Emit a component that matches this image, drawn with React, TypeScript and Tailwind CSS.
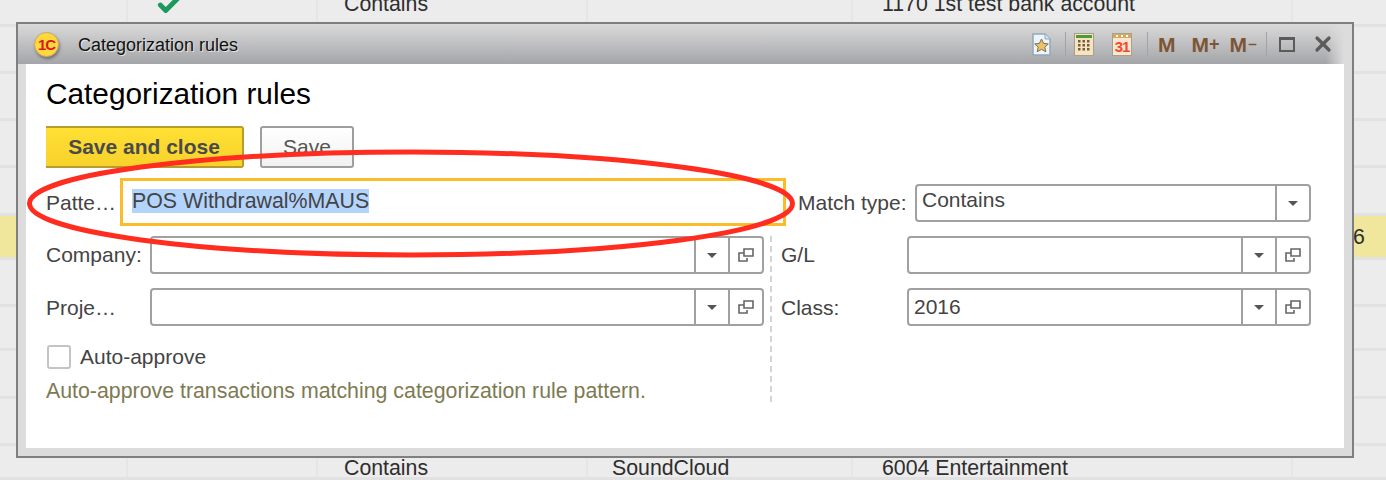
import { Check, Minus, X } from "lucide-react";

const font = "font-['Liberation_Sans',Arial,sans-serif]";
const labelClass = "text-[21px] leading-6 text-[#444]";

// rows of the grid behind the dialog
const rows = [
  { h: "h-[27px]", align: "items-end pb-[8px]", contains: true, vendor: "", account: "1170 1st test bank account", check: true },
  { h: "h-[47px]" },
  { h: "h-[47px]" },
  { h: "h-[47px]" },
  { h: "h-[48px]" },
  { h: "h-[44px]", yellow: true, last: "6" },
  { h: "h-[47px]" },
  { h: "h-[44px]" },
  { h: "h-[48px]" },
  { h: "h-[47px]" },
  { h: "h-[34px]", align: "items-center pt-[12px]", contains: true, vendor: "SoundCloud", account: "6004 Entertainment" },
];

function BackgroundRow({ row }: { row: (typeof rows)[number] }) {
  const cell = `flex border-r-2 border-[#e6e6e6] ${row.align ?? "items-center"}`;
  return (
    <div
      className={`grid grid-cols-[128px_190px_270px_265px_440px_93px] grid-rows-[minmax(0,1fr)] border-b-[3px] border-[#e2e2e2] text-[21.3px] leading-6 text-[#2e2e2e] ${row.h} ${
        row.yellow ? "bg-[#f0e69c]" : "bg-[#ececec]"
      }`}
    >
      <div className={cell} />
      <div className={`${cell} pl-[28px]`}>
        {row.check && <Check size={26} strokeWidth={4.5} className="translate-y-[2px] text-[#1d9a5b]" />}
      </div>
      <div className={`${cell} pl-[26px]`}>{row.contains && "Contains"}</div>
      <div className={`${cell} pl-[24px]`}>{row.vendor}</div>
      <div className={`${cell} pl-[29px]`}>{row.account}</div>
      <div className={`flex pl-[60px] ${row.align ?? "items-center"}`}>{row.last}</div>
    </div>
  );
}

function Caret() {
  return <span className="h-0 w-0 border-x-[5px] border-t-[5px] border-x-transparent border-t-[#555]" />;
}

function OpenIcon() {
  return (
    <svg width="16" height="14" viewBox="0 0 16 14" fill="none" stroke="#666" strokeWidth="1.6">
      <path d="M6 1h9v7h-9z" />
      <path d="M6 5h-5v8h8v-3" />
    </svg>
  );
}

function Field({
  value,
  open = true,
  className = "",
  textClass = "leading-[30px]",
}: {
  value?: string;
  open?: boolean;
  className?: string;
  textClass?: string;
}) {
  return (
    <div
      className={`flex h-[38px] items-stretch rounded-[4px] border-2 border-[#a0a0a0] bg-white text-[21px] text-[#444] ${className}`}
    >
      <div className={`flex-1 pl-[5px] ${textClass}`}>{value}</div>
      <div className="flex w-[34px] items-center justify-center border-l-2 border-[#a0a0a0]">
        <Caret />
      </div>
      {open && (
        <div className="flex w-[34px] items-center justify-center border-l-2 border-[#a0a0a0]">
          <OpenIcon />
        </div>
      )}
    </div>
  );
}

function Logo() {
  return (
    <div className="flex h-[25px] w-[25px] items-center justify-center rounded-full border border-[#c9a877] bg-[#ffd83a] shadow-[1px_2px_3px_rgba(0,0,0,0.35)]">
      <span className="text-[15px] font-bold leading-none tracking-[-1px] text-[#d9181f]">1С</span>
    </div>
  );
}

function FavoriteIcon() {
  return (
    <svg width="19" height="23" viewBox="0 0 19 23">
      <path d="M1 1h12l5 5v16h-17z" fill="#eef4fa" stroke="#8fa9bd" strokeWidth="1.5" />
      <path d="M13 1v5h5" fill="#d5e2ee" stroke="#8fa9bd" strokeWidth="1" />
      <path
        d="M9.5 6l2.1 4.4 4.7.5-3.5 3.2 1 4.7-4.3-2.5-4.3 2.5 1-4.7-3.5-3.2 4.7-.5z"
        fill="#e8c36a"
        stroke="#7d6f55"
        strokeWidth="1"
      />
    </svg>
  );
}

function CalculatorIcon() {
  const keys = [7, 11, 15];
  return (
    <svg width="20" height="23" viewBox="0 0 20 23">
      <rect x="0.5" y="0.5" width="19" height="22" fill="#f8e3bf" stroke="#a9a08c" />
      <rect x="2" y="2" width="16" height="3" fill="#4d9a3c" />
      {keys.map((y) => (
        <g key={y} fill="#6e5f45">
          <rect x="4" y={y} width="2.5" height="2.5" />
          <rect x="8.5" y={y} width="2.5" height="2.5" />
          <rect x="13" y={y} width="2.5" height="2.5" />
        </g>
      ))}
    </svg>
  );
}

function CalendarIcon() {
  return (
    <div className="flex h-[23px] w-[20px] flex-col border border-[#a9a08c] bg-[#fbe6cf]">
      <div className="flex h-[5px] items-center justify-around bg-[#d9a860] px-[2px]">
        <span className="h-[2px] w-[2px] bg-white" />
        <span className="h-[2px] w-[2px] bg-white" />
        <span className="h-[2px] w-[2px] bg-white" />
      </div>
      <span className="text-center text-[15px] font-bold leading-[17px] tracking-[-1px] text-[#ef4b33]">31</span>
    </div>
  );
}

function ToolbarDivider() {
  return <div className="h-[24px] w-px bg-[#a3a3a5]" />;
}

function TitleBar() {
  const memClass = "text-[21px] font-bold leading-none text-[#7d5534]";
  return (
    <div className="flex h-[40px] items-center bg-[linear-gradient(to_right,transparent_calc(100%-26px),#dcdcdc_calc(100%-8px)),linear-gradient(to_bottom,#dadada,#a4a5a8)] pl-[16px]">
      <Logo />
      <span className="ml-[19px] pt-[2px] text-[18px] text-[#111] [text-shadow:1px_1px_0_rgba(255,255,255,0.6)]">
        Categorization rules
      </span>
      <div className="ml-auto flex items-center pr-[17px]">
        <FavoriteIcon />
        <div className="ml-[14px]"><ToolbarDivider /></div>
        <div className="ml-[8px]"><CalculatorIcon /></div>
        <div className="ml-[18px]"><CalendarIcon /></div>
        <div className="ml-[15px]"><ToolbarDivider /></div>
        <span className={`ml-[10px] ${memClass}`}>M</span>
        <span className={`ml-[16px] flex items-center ${memClass}`}>
          M<span className="text-[18px]">+</span>
        </span>
        <span className={`ml-[10px] flex items-center ${memClass}`}>
          M<Minus size={11} strokeWidth={3.5} className="text-[#7d5534]" />
        </span>
        <div className="ml-[8px]"><ToolbarDivider /></div>
        <div className="ml-[12px] h-[15px] w-[16px] border-2 border-t-[3px] border-[#5b5b5b]" />
        <X size={24} strokeWidth={3.2} className="ml-[16px] text-[#5b5b5b]" />
      </div>
    </div>
  );
}

function Form() {
  return (
    <div className="h-[384px] bg-white pl-[20px] pr-[33px] pt-[13px]">
      <h1 className="text-[29.8px] leading-[34px] text-black">Categorization rules</h1>

      <div className="mt-[15px] flex gap-[16px]">
        <button className="h-[42px] w-[198px] rounded-r-[3px] border-y-2 border-r-2 border-[#b69c2c] bg-gradient-to-b from-[#ffe033] to-[#f7d22c] text-[21px] font-bold text-[#4a4a4a]">
          Save and close
        </button>
        <button className="h-[42px] w-[94px] rounded-[3px] border-2 border-[#9e9e9e] bg-gradient-to-b from-white to-[#f1f1f1] text-[21px] text-[#555]">
          Save
        </button>
      </div>

      <div className="mt-[10px] flex h-[48px] items-start">
        <label className={`w-[74px] pt-[13px] ${labelClass}`}>Patte…</label>
        <div className="h-[48px] w-[666px] border-[3px] border-[#fbbc2a] pl-[9px] pt-[8px] text-[21.35px] leading-6 text-[#444]">
          <span className="bg-[#b3d4fd]">POS Withdrawal%MAUS</span>
        </div>
        <label className={`ml-[12px] w-[117px] pt-[13px] ${labelClass}`}>Match type:</label>
        <Field value="Contains" open={false} className="mt-[6px] w-[396px]" textClass="leading-[28px]" />
      </div>

      <div className="mt-[10px] flex items-start">
        <div className="w-[718px]">
          <div className="flex items-center">
            <label className={`w-[104px] ${labelClass}`}>Company:</label>
            <Field className="w-[614px]" />
          </div>
          <div className="mt-[14px] flex items-center">
            <label className={`w-[104px] pt-[2px] ${labelClass}`}>Proje…</label>
            <Field className="w-[614px]" />
          </div>
          <label className={`mt-[18px] flex items-center gap-[9px] ${labelClass}`}>
            <span className="ml-px h-[24px] w-[24px] rounded-[3px] border-2 border-[#c4c4c4] bg-white" />
            <span className="pt-px">Auto-approve</span>
          </label>
          <p className="mt-[10px] text-[21.33px] leading-6 text-[#7d7a52]">
            Auto-approve transactions matching categorization rule pattern.
          </p>
        </div>
        <div className="ml-[6px] h-[166px] border-l-2 border-dashed border-[#d4d4d4]" />
        <div className="ml-[9px] w-[530px]">
          <div className="flex items-center">
            <label className={`w-[126px] ${labelClass}`}>G/L</label>
            <Field className="w-[404px]" />
          </div>
          <div className="mt-[14px] flex items-center">
            <label className={`w-[126px] pt-[2px] ${labelClass}`}>Class:</label>
            <Field value="2016" className="w-[404px]" textClass="leading-[34px]" />
          </div>
        </div>
      </div>
    </div>
  );
}

export default function App() {
  return (
    <div className={`relative h-[480px] w-[1386px] overflow-hidden bg-[#ececec] ${font}`}>
      {rows.map((row, i) => (
        <BackgroundRow key={i} row={row} />
      ))}

      {/* dialog floats over the grid */}
      <div className="absolute left-[16px] top-[22px] h-[436px] w-[1338px] border-2 border-[#7f7f7f] bg-[#dcdcdc]">
        <TitleBar />
        <div className="mx-[8px]">
          <Form />
        </div>
      </div>

      {/* hand drawn annotation on top of the screenshot */}
      <svg className="pointer-events-none absolute inset-0" width="1386" height="480" fill="none">
        <ellipse cx="411" cy="203.5" rx="381.5" ry="51.5" stroke="#ff2d20" strokeWidth="5" />
      </svg>
    </div>
  );
}
